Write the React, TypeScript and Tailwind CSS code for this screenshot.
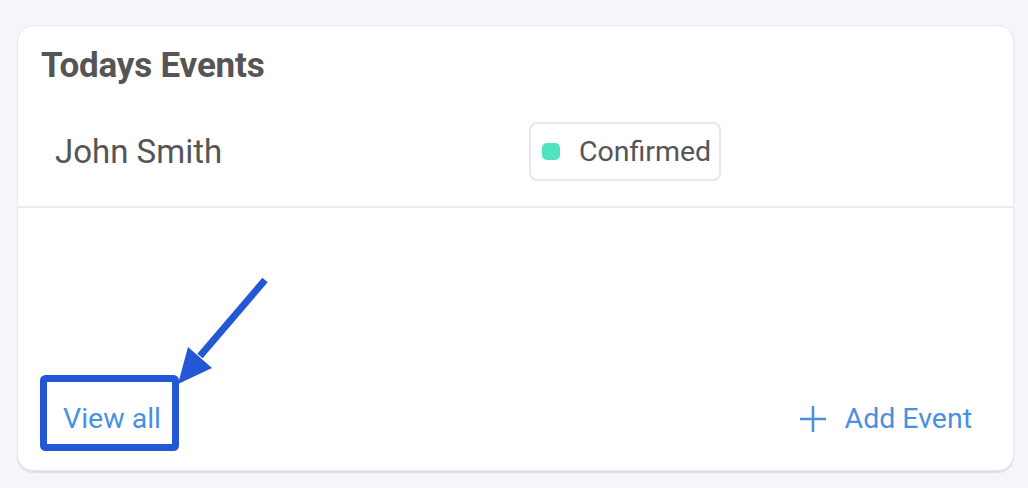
import React from 'react';

const events = [{ name: "John Smith", status: "Confirmed" }];

const App = () => {
  return (
    <div className="relative w-[1028px] h-[488px] bg-[#f5f6fa] pt-[25px] pl-[17px] font-['Roboto',sans-serif] overflow-hidden">
      <div className="w-[997px] h-[446px] bg-white border border-[#e6e8ef] rounded-[16px] shadow-[0_2px_1px_rgba(0,0,0,0.09)] flex flex-col">
        <h2 className="pl-[23px] pt-[19px] text-[35px] leading-[41px] font-bold text-[#555555] tracking-[-0.2px]">
          Todays Events
        </h2>

        {events.map((ev) => (
          <div key={ev.name} className="mt-[11px] h-[111px] flex items-center border-b-2 border-[#e9ebf3]">
            <span className="w-[511px] pl-[37px] text-[33px] leading-[38px] text-[#555555]">{ev.name}</span>
            <span className="w-[192px] h-[59px] flex items-center pl-[11px] border-2 border-[#e4e7f0] rounded-[8px]">
              <span className="w-[18px] h-[17px] rounded-[5px] bg-[#50e3c2]" />
              <span className="ml-[19px] text-[28.5px] leading-[34px] text-[#555555]">{ev.status}</span>
            </span>
          </div>
        ))}

        <div className="mt-auto pb-[32px] pl-[45px] pr-[41px] flex items-center justify-between text-[28.5px] leading-[38px] text-[#4a90e2]">
          <span>View all</span>
          <span className="flex items-center gap-[18px]">
            <svg width="28" height="28" viewBox="0 0 28 28" fill="none" stroke="#4a90e2" strokeWidth="2.5">
              <path d="M14 1v26M1 14h26" />
            </svg>
            Add Event
          </span>
        </div>
      </div>

      {/* annotation overlay */}
      <svg className="absolute inset-0 pointer-events-none" width="1028" height="488" viewBox="0 0 1028 488">
        <rect x="43.5" y="378.5" width="132" height="69" rx="2" fill="none" stroke="#2457d6" strokeWidth="7" />
        <line x1="265" y1="280" x2="200" y2="356" stroke="#2457d6" strokeWidth="7" />
        <polygon points="178,384 188,347 212,368" fill="#2457d6" />
      </svg>
    </div>
  );
};

export default App;
